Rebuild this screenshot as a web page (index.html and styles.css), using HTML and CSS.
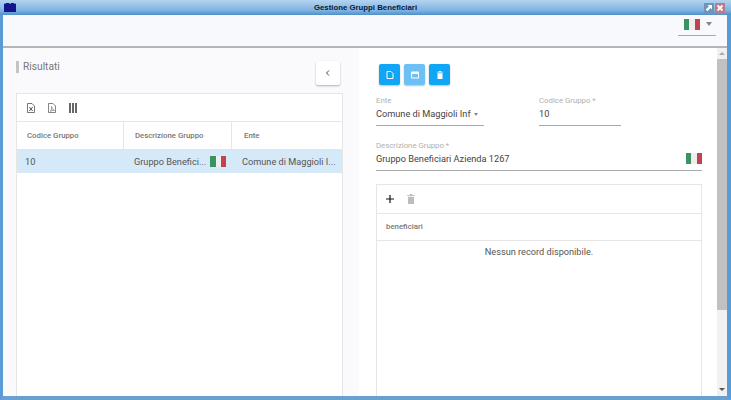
FILE: index.html
```html
<!DOCTYPE html>
<html lang="it">
<head>
    <meta charset="UTF-8">
    <title>Gestione Gruppi Beneficiari</title>
    <link rel="stylesheet" href="styles.css">
</head>
<body>
    <div class="window">
        <div class="titlebar">
            <svg class="app-icon" viewBox="0 0 12 9"><rect width="12" height="9" fill="#14148c"/><path d="M0 0h2v1H0zM5 0h2v1H5zM10 0h2v1h-2z" fill="#5f8fd0"/></svg>
            <span class="title">Gestione Gruppi Beneficiari</span>
            <div class="win-buttons">
                <span class="win-btn win-max"><svg viewBox="0 0 10 10"><path d="M3.500 2H8v4.500L6.600 5.100 3.400 8.300 1.700 6.600 4.900 3.400z" fill="#fff"/></svg></span>
                <span class="win-btn win-close"><svg viewBox="0 0 10 10"><path d="M2.500 2.500l5 5M7.500 2.500l-5 5" stroke="#fff" stroke-width="1.800"/></svg></span>
            </div>
        </div>

        <div class="topbar">
            <div class="lang-select">
                <span class="flag"><i></i><i></i><i></i></span>
                <span class="caret"></span>
            </div>
        </div>

        <div class="content">
            <div class="left-panel">
                <div class="results-head">
                    <h2 class="results-title">Risultati</h2>
                    <button class="back-btn">
                        <svg viewBox="0 0 10 10" width="10" height="10"><path d="M6 2.500L3.500 5 6 7.500" fill="none" stroke="#444" stroke-width="1"/></svg>
                    </button>
                </div>
                <div class="table-card">
                    <div class="table-tools">
                        <svg class="tool" viewBox="0 0 8 10"><path d="M.5 .5h4.500L7.500 3v6.500h-7z" fill="none" stroke="#555" stroke-width=".8"/><path d="M2.300 4l3.400 4M5.700 4L2.300 8" stroke="#555"/></svg>
                        <svg class="tool" viewBox="0 0 8 10"><path d="M.5 .5h4.500L7.500 3v6.500h-7z" fill="none" stroke="#666" stroke-width=".8"/><path d="M2 8.300C3.500 7 4 5 3.600 3.500c.4 2 1.200 3.400 2.900 3.900-1.700 0-3.200.2-4.500.9z" fill="none" stroke="#666" stroke-width=".6"/></svg>
                        <svg class="tool" viewBox="0 0 8 10"><path d="M0 0h2v10H0zM3 0h2v10H3zM6 0h2v10H6z" fill="#666"/></svg>
                    </div>
                    <div class="grid-row grid-head">
                        <div>Codice Gruppo</div>
                        <div>Descrizione Gruppo</div>
                        <div>Ente</div>
                    </div>
                    <div class="grid-row grid-selected">
                        <div>10</div>
                        <div class="cell-flag">Gruppo Benefici... <span class="flag"><i></i><i></i><i></i></span></div>
                        <div>Comune di Maggioli I...</div>
                    </div>
                </div>
            </div>

            <div class="right-panel">
                <div class="form-area">
                    <div class="actions">
                        <button class="action-btn">
                            <svg viewBox="0 0 10 10"><path d="M2 1.500h4L8 3.500V8.500H2z" fill="none" stroke="#fff"/></svg>
                        </button>
                        <button class="action-btn action-off">
                            <svg viewBox="0 0 10 10"><path d="M1.500 2h7v6h-7z" fill="none" stroke="#fff"/><path d="M1.500 2h7v2h-7z" fill="#fff"/></svg>
                        </button>
                        <button class="action-btn">
                            <svg viewBox="0 0 10 10"><path d="M2.500 3.200h5V9h-5zM2 1.800h6v.8H2zM4 1h2v1H4z" fill="#fff"/></svg>
                        </button>
                    </div>
                    <div class="field-row">
                        <div class="field field-ente">
                            <label>Ente</label>
                            <div class="field-value">Comune di Maggioli Inf <span class="caret caret-sm"></span></div>
                        </div>
                        <div class="field field-code">
                            <label>Codice Gruppo *</label>
                            <div class="field-value">10</div>
                        </div>
                    </div>
                    <div class="field field-desc">
                        <label>Descrizione Gruppo *</label>
                        <div class="field-value field-between">Gruppo Beneficiari Azienda 1267 <span class="flag"><i></i><i></i><i></i></span></div>
                    </div>
                    <div class="sub-card">
                        <div class="sub-tools">
                            <svg class="sub-plus" viewBox="0 0 8 8"><path d="M4 0v8M0 4h8" stroke="#111" stroke-width="1.200"/></svg>
                            <svg class="sub-trash" viewBox="0 0 8 10"><path d="M1 2.800h6V10H1zM0 1.300h8V2H0zM2.700 0h2.600v1.300H2.700z" fill="#bdbdbd"/></svg>
                        </div>
                        <div class="sub-head">beneficiari</div>
                        <div class="empty">Nessun record disponibile.</div>
                    </div>
                </div>
                <div class="scrollbar">
                    <span class="arrow arrow-up"></span>
                    <div class="thumb"></div>
                    <span class="arrow arrow-down"></span>
                </div>
            </div>
        </div>
    </div>
</body>
</html>
```

FILE: styles.css
```css
:root {
    --frame: #5b9bd5;
    --border: #e6e6e6;
    --text: #555;
    --blue: #10a5f5;
}

* {
    margin: 0;
    padding: 0;
    box-sizing: border-box;
}

html, body {
    width: 731px;
    height: 400px;
    overflow: hidden;
}

body {
    font-family: Roboto, "Liberation Sans", sans-serif;
    color: var(--text);
    background: #fff;
}

.window {
    display: flex;
    flex-direction: column;
    height: 400px;
    border-left: 3px solid var(--frame);
    border-right: 4px solid var(--frame);
    border-bottom: 4px solid #6a9fd0;
}

.titlebar {
    display: flex;
    align-items: center;
    justify-content: center;
    position: relative;
    height: 15px;
    margin: 0 -4px 0 -3px;
    flex-shrink: 0;
    background: linear-gradient(#b4d4f0, #7fb2e2 70%, #4f8fca);
}

.app-icon {
    position: absolute;
    left: 4px;
    top: 3px;
    width: 12px;
    height: 9px;
}

.title {
    font-family: "Liberation Sans", sans-serif;
    font-size: 7.8px;
    font-weight: bold;
    color: #0a1a33;
}

.win-buttons {
    position: absolute;
    right: 6px;
    top: 3px;
    display: flex;
    gap: 1px;
}

.win-btn {
    display: block;
    width: 10px;
    height: 10px;
}

.win-btn svg {
    display: block;
    width: 10px;
    height: 10px;
}

.win-max {
    background: #6f94b6;
}

.win-close {
    background: #b97c88;
}

.topbar {
    display: flex;
    justify-content: flex-end;
    height: 33px;
    flex-shrink: 0;
    padding-right: 11px;
    background: #f8f9fd;
    border-bottom: 2px solid #b5b5b8;
}

.lang-select {
    display: flex;
    align-items: center;
    gap: 6px;
    width: 38px;
    height: 22px;
    padding: 0 0 1px 6px;
    margin-top: 0;
    align-self: flex-end;
    margin-bottom: 10px;
    border-bottom: 1px solid #aaa;
}

.flag {
    display: inline-flex;
    flex-shrink: 0;
    width: 16px;
    height: 11px;
}

.flag i {
    flex: 1;
}

.flag i:nth-child(1) {
    background: #3a9461;
}

.flag i:nth-child(2) {
    background: #eeeeee;
}

.flag i:nth-child(3) {
    background: #c0434f;
}

.caret {
    width: 0;
    height: 0;
    border-left: 3px solid transparent;
    border-right: 3px solid transparent;
    border-top: 4px solid #888;
}

.caret-sm {
    display: inline-block;
    margin-left: 1px;
    border-left-width: 2.5px;
    border-right-width: 2.5px;
    border-top-width: 3px;
    vertical-align: 1px;
}

.content {
    display: flex;
    flex: 1;
    min-height: 0;
}

.left-panel {
    display: flex;
    flex-direction: column;
    width: 356px;
    padding: 13px 16px 0 13px;
    background: #fafafd;
}

.results-head {
    display: flex;
    justify-content: space-between;
    align-items: flex-start;
    height: 32px;
    padding-right: 3px;
}

.results-title {
    font-size: 10.2px;
    font-weight: normal;
    color: #777;
    line-height: 12px;
    padding-left: 4px;
    border-left: 3px solid #c4c4c4;
}

.back-btn {
    display: flex;
    align-items: center;
    justify-content: center;
    width: 24px;
    height: 24px;
    border: none;
    border-radius: 2px;
    background: #fff;
    box-shadow: 0 1px 2px rgba(0, 0, 0, 0.3);
}

.table-card {
    flex: 1;
    background: #fff;
    border: 1px solid var(--border);
    border-bottom: none;
}

.table-tools {
    display: flex;
    align-items: center;
    gap: 13px;
    height: 28px;
    padding-left: 10px;
    border-bottom: 1px solid var(--border);
}

.tool {
    width: 8px;
    height: 10px;
}

.grid-row {
    display: grid;
    grid-template-columns: 107px 108px 1fr;
    align-items: center;
    font-size: 9.2px;
}

.grid-head {
    height: 27px;
    font-size: 7.8px;
    font-weight: 500;
    color: #777;
}

.grid-head div {
    display: flex;
    align-items: center;
    height: 100%;
    padding-left: 10px;
    border-right: 1px solid var(--border);
}

.grid-head div:nth-child(2) {
    padding-left: 11px;
}

.grid-head div:last-child {
    padding-left: 12px;
    border-right: none;
}

.grid-selected {
    height: 24px;
    background: #d6e9f9;
    color: #555;
}

.grid-selected div {
    padding-left: 10px;
    white-space: nowrap;
}

.grid-selected div:first-child {
    padding-left: 8px;
}

.cell-flag {
    display: flex;
    align-items: center;
    gap: 4px;
}

.right-panel {
    display: flex;
    flex: 1;
    min-width: 0;
    background: #fff;
}

.form-area {
    display: flex;
    flex-direction: column;
    width: 357px;
    flex-shrink: 0;
    padding: 16px 14px 0 17px;
}

.actions {
    display: flex;
    gap: 4px;
    padding-left: 3px;
    height: 21px;
}

.action-btn {
    display: flex;
    align-items: center;
    justify-content: center;
    width: 21px;
    height: 21px;
    border: none;
    border-radius: 2px;
    background: var(--blue);
    box-shadow: 0 1px 2px rgba(0, 0, 0, 0.25);
}

.action-btn svg {
    width: 10px;
    height: 10px;
}

.action-off {
    background: #6cc0f3;
}

.field label {
    display: block;
    font-size: 7.8px;
    line-height: 10px;
    color: #b0b0b0;
}

.field-value {
    font-size: 9.2px;
    line-height: 14px;
    padding: 1px 0 5px;
    color: #444;
    border-bottom: 1px solid #aaa;
    height: 20px;
    white-space: nowrap;
}

.field-row {
    display: flex;
    gap: 55px;
    margin-top: 11px;
}

.field-ente {
    width: 108px;
}

.field-code {
    width: 82px;
}

.field-desc {
    margin-top: 15px;
}

.field-between {
    display: flex;
    justify-content: space-between;
    align-items: center;
}

.sub-card {
    flex: 1;
    margin-top: 13px;
    border: 1px solid var(--border);
    border-bottom: none;
}

.sub-tools {
    display: flex;
    align-items: center;
    gap: 13px;
    height: 29px;
    padding-left: 9px;
    border-bottom: 1px solid var(--border);
}

.sub-plus {
    width: 8px;
    height: 8px;
}

.sub-trash {
    width: 8px;
    height: 10px;
}

.sub-head {
    height: 27px;
    line-height: 25px;
    padding-left: 9px;
    font-size: 7.8px;
    font-weight: 500;
    color: #777;
    border-bottom: 1px solid var(--border);
}

.empty {
    padding-top: 4px;
    text-align: center;
    font-size: 9.2px;
    line-height: 14px;
    color: #555;
}

.scrollbar {
    display: flex;
    flex-direction: column;
    align-items: center;
    position: relative;
    width: 10px;
    margin-left: 1px;
    background: #f1f1f1;
}

.thumb {
    width: 100%;
    height: 251px;
    margin-top: 11px;
    background: #c1c1c1;
}

.arrow {
    position: absolute;
    left: 2px;
    width: 0;
    height: 0;
    border-left: 3px solid transparent;
    border-right: 3px solid transparent;
}

.arrow-up {
    top: 4px;
    border-bottom: 3px solid #aaa;
}

.arrow-down {
    bottom: 5px;
    border-top: 3px solid #555;
}
```
